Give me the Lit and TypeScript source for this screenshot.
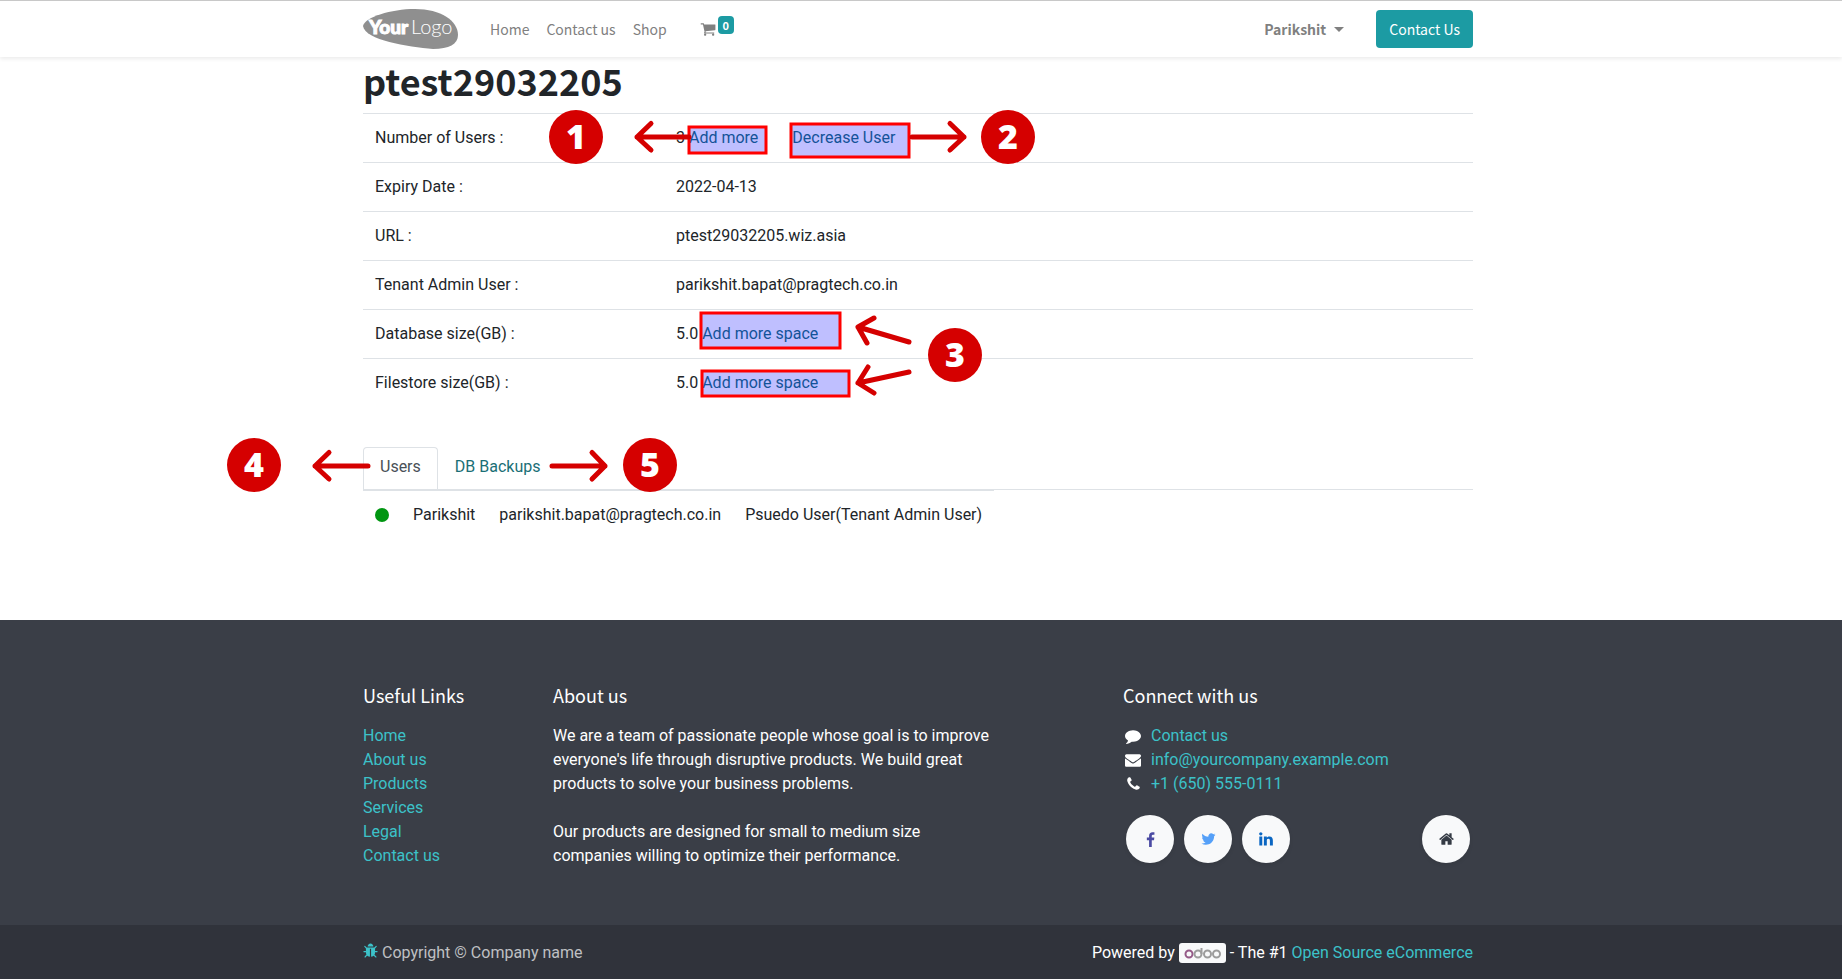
import { LitElement, html, css, svg } from "lit";
import { customElement } from "lit/decorators.js";

const icon = (d: string, w = 1792, cls = "") => html`
  <svg class="fa ${cls}" viewBox="0 0 ${w} 1792" width=${Math.round((w / 1792) * 16)} height="16" aria-hidden="true">
    <path d=${d} />
  </svg>`;

const CART = "M704 1536q0 52-38 90t-90 38-90-38-38-90 38-90 90-38 90 38 38 90zm896 0q0 52-38 90t-90 38-90-38-38-90 38-90 90-38 90 38 38 90zm128-1088v512q0 24-16.500 42.500t-40.500 21.500l-1044 122q13 60 13 70 0 16-24 64h920q26 0 45 19t19 45-19 45-45 19h-1024q-26 0-45-19t-19-45q0-11 8-31.500t16-36 21.500-40 15.500-29.500l-177-823h-204q-26 0-45-19t-19-45 19-45 45-19h256q16 0 28.500 6.500t19.500 15.500 13 24.500 8 26 5.500 29.500 4.500 26h1201q26 0 45 19t19 45z";
const COMMENT = "M1792 896q0 174-120 321.500t-326 233-450 85.500q-70 0-145-8-198 175-460 242-49 14-114 22-17 2-30.500-9t-17.500-29v-1q-3-4-.5-12t2-10 4.500-9.500l6-9 7-8.500 8-9q7-8 31-34.500t34.500-38 31-39.500 32.500-51 27-59 26-76q-157-89-247.500-220t-90.500-281q0-130 71-248.500t191-204.500 286-136.500 348-50.500q244 0 450 85.500t326 233 120 321.500z";
const ENVELOPE = "M1792 710v794q0 66-47 113t-113 47h-1472q-66 0-113-47t-47-113v-794q44 49 101 87 362 246 497 345 57 42 92.500 65.500t94.500 48 110 24.500h2q51 0 110-24.500t94.500-48 92.500-65.500q170-123 498-345 57-39 100-87zm0-294q0 79-49 151t-122 123q-376 261-468 325-10 7-42.500 30.500t-54 38-52 32.500-57.500 27-50 9h-2q-23 0-50-9t-57.500-27-52-32.500-54-38-42.500-30.500q-91-64-262-182.500t-205-142.500q-62-42-117-115.500t-55-136.500q0-78 41.500-130t118.500-52h1472q65 0 112.500 47t47.500 113z";
const PHONE = "M1408 1240q0 27-10 70.500t-21 68.500q-21 50-122 106-94 51-186 51-27 0-53-3.500t-57.500-12.500-47-14.500-55.500-20.500-49-18q-98-35-175-83-127-79-264-216t-216-264q-48-77-83-175-3-9-18-49t-20.500-55.500-14.500-47-12.500-57.500-3.500-53q0-92 51-186 56-101 106-122 25-11 68.500-21t70.500-10q14 0 21 3 18 6 53 76 11 19 30 54t35 63.500 31 53.500q3 4 17.500 25t21.500 35.500 7 28.500q0 20-28.500 50t-62 55-62 53-28.500 46q0 9 5 22.500t8.500 20.500 14 24 11.500 19q76 137 174 235t235 174q2 1 19 11.500t24 14 20.500 8.500 22.500 5q18 0 46-28.500t53-62 55-62 50-28.500q14 0 28.500 7t35.500 21.500 25 17.500q25 15 53.500 31t63.500 35 54 30q70 35 76 53 3 7 3 21z";
const FACEBOOK = "M959 140v264h-157q-86 0-116 36t-30 108v189h293l-39 296h-254v759h-306v-759h-255v-296h255v-218q0-186 104-288.500t277-102.500q147 0 228 12z";
const TWITTER = "M1620 408q-67 98-162 167 1 14 1 42 0 130-38 259.500t-115.500 248.500-184.500 210.500-258 146-323 54.500q-271 0-496-145 35 4 78 4 225 0 401-138-105-2-188-64.500t-114-159.500q33 5 61 5 43 0 85-11-112-23-185.500-111.500t-73.500-205.500v-4q68 38 146 41-66-44-105-115t-39-154q0-88 44-163 121 149 294.500 238.500t371.500 99.500q-8-38-8-74 0-134 94.500-228.500t228.500-94.500q140 0 236 102 109-21 205-78-37 115-142 178 93-10 186-50z";
const LINKEDIN = "M349 625v991h-330v-991h330zm21-306q1 73-50.500 122t-135.500 49h-2q-82 0-132-49t-50-122q0-74 51.500-122.500t134.500-48.500 133 48.500 51 122.500zm1166 729v568h-329v-530q0-105-40.500-164.500t-126.500-59.500q-63 0-105.500 34.500t-63.500 85.500q-11 30-11 81v553h-329q2-399 2-647t-1-296l-1-48h329v144h-2q20-32 41-56t56.500-52 87-43.500 114.500-15.500q171 0 275 113.500t104 332.500z";
const HOME = "M1408 992v480q0 26-19 45t-45 19h-384v-384h-256v384h-384q-26 0-45-19t-19-45v-480q0-1 .5-3t.5-3l575-474 575 474q1 2 1 6zm223-69l-62 74q-8 9-21 11h-3q-13 0-21-7l-692-577-692 577q-12 8-24 7-13-2-21-11l-62-74q-8-10-7-23.500t11-21.500l719-599q32-26 76-26t76 26l244 204v-195q0-14 9-23t23-9h192q14 0 23 9t9 23v408l219 182q10 8 11 21.500t-7 23.500z";
const BUG = "M1632 960q0 26-19 45t-45 19h-224q0 171-67 290l208 209q19 19 19 45t-19 45q-18 19-45 19t-45-19l-198-197q-5 5-15 13t-42 28.500-65 36.500-82 29-97 13v-896h-128v896q-51 0-101.500-13.500t-87-33-66-39-43.500-32.500l-15-14-183 207q-20 21-48 21-24 0-43-16-19-18-20.500-44.500t15.500-46.500l202-227q-58-114-58-274h-224q-26 0-45-19t-19-45 19-45 45-19h224v-294l-173-173q-19-19-19-45t19-45 45-19 45 19l173 173h844l173-173q19-19 45-19t45 19 19 45-19 45l-173 173v294h224q26 0 45 19t19 45zm-480-576h-640q0-133 93.500-226.500t226.500-93.500 226.500 93.500 93.500 226.500z";

@customElement("app-root")
export class AppRoot extends LitElement {
  static styles = css`
    :host {
      display: block;
      min-height: 100vh;
      background: #fff;
      color: #212529;
      font: 16px/24px Roboto, sans-serif;
    }
    * { box-sizing: border-box; }
    a { color: #1a6f76; text-decoration: none; }
    h1, h5, p, ul, table { margin: 0; padding: 0; }
    ul { list-style: none; }
    .fa { fill: currentColor; display: block; }
    .wrap { width: 100%; max-width: 1140px; margin: 0 auto; padding: 0 15px; }
    .page { padding-right: 6px; }
    .head { font-family: "Noto Sans CJK SC", "Noto Sans CJK JP", sans-serif; }

    header {
      border-top: 1px solid #c8c8c8;
      box-shadow: 0 2px 4px rgba(0, 0, 0, 0.08);
      position: relative;
    }
    .bar { display: flex; align-items: center; height: 56px; font-size: 14px; color: #808080; }
    .bar a { color: inherit; }
    .logo { display: block; margin-right: 32px; }
    .logo svg { display: block; }
    .menu { display: flex; align-items: center; gap: 17px; flex: 1; }
    .cart { display: flex; align-items: flex-start; gap: 2px; margin-left: 16px; }
    .cart .fa { margin-top: 5px; }
    .badge {
      background: #1c9ba3; color: #fff; border-radius: 4px; font-size: 11px; font-weight: 700;
      line-height: 18px; height: 18px; width: 16px; text-align: center; margin-bottom: 8px;
    }
    button { border: 0; background: none; padding: 0; font: inherit; color: inherit; cursor: pointer; }
    .user { font-weight: 700; display: flex; align-items: center; gap: 8px; margin-right: 32px; }
    .caret { border: 5px solid transparent; border-top-color: currentColor; border-bottom: 0; }
    .bar .cta { background: #1c9ba3; color: #fff; border-radius: 4px; line-height: 24px; padding: 7px 13px; }

    main { position: relative; }
    h1 { font-size: 36px; line-height: 46px; font-weight: 700; padding-bottom: 10px; }
    .info { width: 100%; border-collapse: collapse; table-layout: fixed; }
    .info th, .info td { border-top: 1px solid #dee2e6; padding: 12px; text-align: left; font-weight: 400; }
    .info th { width: 301px; }
    .gap { margin-left: 30px; }
    .tabs { display: flex; margin-top: 40px; border-bottom: 1px solid #dee2e6; }
    .tab { padding: 7px 16px 10px; border: 1px solid transparent; border-bottom: 0; line-height: 24px; color: #1a6f76; }
    .tab.on { border-color: #dee2e6; border-radius: 4px 4px 0 0; color: #495057; background: #fff; }
    .users { border-collapse: collapse; }
    .users td { border-top: 1px solid #dee2e6; padding: 12px; white-space: nowrap; }
    .dot { display: block; width: 14px; height: 14px; border-radius: 50%; background: #009611; }
    .marks { position: absolute; left: 15px; top: 0; width: 100%; height: 100%; overflow: visible; pointer-events: none; }
    .hot rect { fill: rgba(0, 0, 255, 0.25); stroke: #f00; stroke-width: 3px; }
    .arrow { fill: none; stroke: #d50000; stroke-width: 5px; stroke-linecap: round; stroke-linejoin: round; }
    .num circle { fill: #d50000; }
    .num text { fill: #fff; font: 800 34px "Open Sans", sans-serif; text-anchor: middle; }

    footer { margin-top: 81px; background: #3a3e47; color: #fff; }
    footer a { color: #3cc2c9; }
    .cols { display: grid; grid-template-columns: 2fr 6fr 4fr; margin: 0 -15px; padding: 63px 0 57px; }
    .cols > div { padding: 0 15px; }
    .about p { max-width: 445px; }
    .about p + p { margin-top: 24px; }
    h5 { font-size: 18px; line-height: 24px; font-weight: 400; margin-bottom: 17px; }
    .contact li { display: flex; align-items: center; gap: 8px; }
    .ico { width: 20px; display: flex; justify-content: center; }
    .social { display: flex; gap: 10px; padding: 19px 3px 0; }
    .social a {
      width: 48px; height: 48px; border-radius: 50%; background: #f8f9fa; display: flex;
      align-items: center; justify-content: center; box-shadow: 0 2px 4px rgba(0, 0, 0, 0.08);
    }
    .social .f { color: #4b4ba3; }
    .social .t { color: #55a0f8; }
    .social .l { color: #0a66c2; }
    .social .h { color: #343a44; margin-left: auto; }
    .legal { background: #30333b; }
    .legal .wrap { display: flex; justify-content: space-between; align-items: center; padding-top: 16px; padding-bottom: 15px; }
    .copy { display: flex; gap: 4px; color: #bfc0c3; }
    .copy .fa { color: #3cc2c9; margin-top: 2px; }
    .power { display: flex; gap: 4px; align-items: center; }
    .odoo { background: #f8f9fa; border-radius: 3px; width: 47px; height: 20px; display: block; }
  `;

  private box(x: number, y: number, r: number, b: number) {
    return svg`<rect x=${x - 363} y=${y - 57} width=${r - x} height=${b - y} />`;
  }

  private num(n: number, x: number, y: number) {
    return svg`<g class="num"><circle cx=${x} cy=${y} r="27" /><text x=${x} y=${y + 12}>${n}</text></g>`;
  }

  render() {
    return html`
      <header class="page">
        <nav class="wrap bar head">
          <a class="logo" href="#" aria-label="Your Logo">
            <svg width="95" height="40" viewBox="0 0 95 40">
              <path fill="#8f8f8f" d="M0 17C2 8 28 0 52 0c26 0 43 12 43 26 0 9-9 14-25 14C45 38 2 31 0 17z" />
              <text x="6" y="25" fill="#fff" stroke="#fff" stroke-width="1" font-family="Lato" font-weight="900" font-size="19">Your</text>
              <text x="48" y="25" fill="#fff" font-family="Lato" font-weight="300" font-size="20">Logo</text>
            </svg>
          </a>
          <div class="menu">
            <a href="#">Home</a><a href="#">Contact us</a><a href="#">Shop</a>
            <a class="cart" href="#" aria-label="Cart">${icon(CART)}<span class="badge">0</span></a>
          </div>
          <button class="user">Parikshit<span class="caret"></span></button>
          <a class="cta" href="#">Contact Us</a>
        </nav>
      </header>

      <div class="page">
        <main class="wrap">
          <h1 class="head">ptest29032205</h1>
          <table class="info">
            <tr><th scope="row">Number of Users :</th><td>3 <a href="#">Add more</a> <a class="gap" href="#">Decrease User</a></td></tr>
            <tr><th scope="row">Expiry Date :</th><td>2022-04-13</td></tr>
            <tr><th scope="row">URL :</th><td>ptest29032205.wiz.asia</td></tr>
            <tr><th scope="row">Tenant Admin User :</th><td>parikshit.bapat@pragtech.co.in</td></tr>
            <tr><th scope="row">Database size(GB) :</th><td>5.0 <a href="#">Add more space</a></td></tr>
            <tr><th scope="row">Filestore size(GB) :</th><td>5.0 <a href="#">Add more space</a></td></tr>
          </table>
          <div class="tabs" role="tablist">
            <button class="tab on" role="tab" aria-selected="true">Users</button>
            <button class="tab" role="tab" aria-selected="false">DB Backups</button>
          </div>
          <table class="users">
            <tr><td><span class="dot"></span></td><td>Parikshit</td><td>parikshit.bapat@pragtech.co.in</td><td>Psuedo User(Tenant Admin User)</td></tr>
          </table>
          <svg class="marks" aria-hidden="true">
            <g class="hot">
              ${this.box(689, 127, 766, 153)}
              ${this.box(791, 124, 909, 157)}
              ${this.box(701, 313, 840, 348)}
              ${this.box(702, 371, 849, 396)}
            </g>
            <g transform="translate(-363 -57)">
              <path class="arrow" d="M689 137H637M651 123.500L637 137L651 150" />
              <path class="arrow" d="M912 137H964M950 123.500L964 137L950 150" />
              <path class="arrow" d="M909 342L858 327M874 318L858 327L867 343" />
              <path class="arrow" d="M909 372L858 383M868 367L858 383L874 393" />
              <path class="arrow" d="M368 466H315M329 452.500L315 466L329 479" />
              <path class="arrow" d="M552 466H605M592 452.500L605 466L592 479" />
              ${this.num(1, 576, 137)} ${this.num(2, 1008, 137)} ${this.num(3, 955, 355)}
              ${this.num(4, 254, 465)} ${this.num(5, 650, 465)}
            </g>
          </svg>
        </main>
      </div>

      <footer>
        <div class="page">
          <div class="wrap">
            <div class="cols">
              <div>
                <h5 class="head">Useful Links</h5>
                <ul>
                  ${["Home", "About us", "Products", "Services", "Legal", "Contact us"].map((t) => html`<li><a href="#">${t}</a></li>`)}
                </ul>
              </div>
              <div class="about">
                <h5 class="head">About us</h5>
                <p>We are a team of passionate people whose goal is to improve everyone's life through disruptive products. We build great products to solve your business problems.</p>
                <p>Our products are designed for small to medium size companies willing to optimize their performance.</p>
              </div>
              <div>
                <h5 class="head">Connect with us</h5>
                <ul class="contact">
                  <li><span class="ico">${icon(COMMENT)}</span><a href="#">Contact us</a></li>
                  <li><span class="ico">${icon(ENVELOPE)}</span><a href="#">info@yourcompany.example.com</a></li>
                  <li><span class="ico">${icon(PHONE, 1408)}</span><a href="#">+1 (650) 555-0111</a></li>
                </ul>
                <div class="social">
                  <a class="f" href="#" aria-label="Facebook">${icon(FACEBOOK, 1024)}</a>
                  <a class="t" href="#" aria-label="Twitter">${icon(TWITTER, 1664)}</a>
                  <a class="l" href="#" aria-label="LinkedIn">${icon(LINKEDIN, 1536)}</a>
                  <a class="h" href="#" aria-label="Home">${icon(HOME, 1664)}</a>
                </div>
              </div>
            </div>
          </div>
        </div>
        <div class="legal page">
          <div class="wrap">
            <span class="copy">${icon(BUG, 1664)}Copyright © Company name</span>
            <span class="power">Powered by
              <svg class="odoo" viewBox="0 0 47 20" role="img" aria-label="odoo" fill="none" stroke="#9c9c9c" stroke-width="2">
                <circle cx="10" cy="11" r="3.500" stroke="#955a88" />
                <circle cx="19" cy="11" r="3.500" /><path d="M22.500 11V5" />
                <circle cx="28.500" cy="11" r="3.500" /><circle cx="37.500" cy="11" r="3.500" />
              </svg>
              <span>- The #1 <a href="#">Open Source eCommerce</a></span>
            </span>
          </div>
        </div>
      </footer>
    `;
  }
}
